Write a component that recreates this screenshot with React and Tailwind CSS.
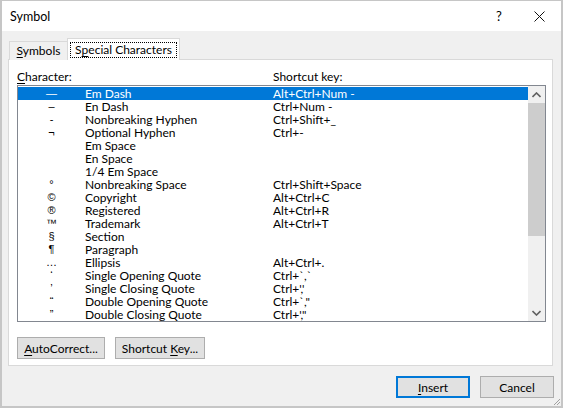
import React from "react";

// Word "Symbol" dialog, Special Characters tab

const rows = [
  ["\u2014", "Em Dash", "Alt+Ctrl+Num -"],
  ["\u2013", "En Dash", "Ctrl+Num -"],
  ["-", "Nonbreaking Hyphen", "Ctrl+Shift+_"],
  ["\u00ac", "Optional Hyphen", "Ctrl+-"],
  ["", "Em Space", ""],
  ["", "En Space", ""],
  ["", "1/4 Em Space", ""],
  ["\u00b0", "Nonbreaking Space", "Ctrl+Shift+Space"],
  ["\u00a9", "Copyright", "Alt+Ctrl+C"],
  ["\u00ae", "Registered", "Alt+Ctrl+R"],
  ["\u2122", "Trademark", "Alt+Ctrl+T"],
  ["\u00a7", "Section", ""],
  ["\u00b6", "Paragraph", ""],
  ["\u2026", "Ellipsis", "Alt+Ctrl+."],
  ["\u2018", "Single Opening Quote", "Ctrl+`,`"],
  ["\u2019", "Single Closing Quote", "Ctrl+','"],
  ["\u201c", "Double Opening Quote", "Ctrl+`,\""],
  ["\u201d", "Double Closing Quote", "Ctrl+',\""],
];

function U({ children }) {
  return <span className="underline underline-offset-2">{children}</span>;
}

function Btn({ children, w, primary }) {
  return (
    <div
      className={
        "h-[22px] flex items-center justify-center bg-[#e1e1e1] " +
        w +
        (primary ? " border-2 border-[#0078d7]" : " border border-[#adadad]")
      }
    >
      {children}
    </div>
  );
}

export default function App() {
  return (
    <div className="w-[563px] h-[408px] flex flex-col border-t border-x-2 border-b-2 border-[#c6c6c6] font-['Lato',sans-serif] text-[12px] text-black leading-[15px] relative overflow-hidden">
      {/* title bar */}
      <div className="h-[30px] bg-white flex items-center pl-[8px] shrink-0">
        <span className="flex-1 text-[12.5px]">Symbol</span>
        <span className="w-[20px] text-center text-[13px] mr-[25px]">?</span>
        <svg width="11" height="11" viewBox="0 0 11 11" className="mr-[16px]">
          <path d="M0.5 0.5L10.5 10.5M10.5 0.5L0.5 10.5" stroke="#111" strokeWidth="1" />
        </svg>
      </div>

      {/* body */}
      <div className="flex-1 bg-[#f0f0f0] pt-[7px] pl-[6px] pr-[8px] flex flex-col">
        {/* tabs */}
        <div className="h-[22px] flex items-end pl-[1px] relative z-10 -mb-px">
          <div className="h-[19px] w-[58px] border-t border-l border-[#d9d9d9] bg-[#f0f0f0] flex items-center justify-center pb-[1px]">
            <span><U>S</U>ymbols</span>
          </div>
          <div className="h-[22px] w-[113px] border-t border-x border-[#d9d9d9] bg-white flex items-center justify-center">
            <div className="border border-dotted border-black px-[4px] h-[16px] flex items-center">
              S<U>p</U>ecial Characters
            </div>
          </div>
        </div>

        {/* panel */}
        <div className="h-[307px] border border-[#d9d9d9] bg-white pt-[9px] pl-[8px]">
          <div className="flex h-[16px]">
            <span className="w-[256px]"><U>C</U>haracter:</span>
            <span>Shortcut key:</span>
          </div>
          <div className="w-[529px] h-[237px] border border-[#828790] flex">
            <div className="flex-1 pt-px overflow-hidden">
              {rows.map(([sym, name, key], i) => (
                <div
                  key={i}
                  className={
                    "h-[13px] leading-[13px] flex items-center overflow-hidden " +
                    (i === 0 ? "bg-[#0078d7] text-white" : "")
                  }
                >
                  <span className="w-[67px] h-[13px] leading-[13px] text-center text-[11px] font-['Liberation_Sans',sans-serif]">{sym}</span>
                  <span className="w-[188px] h-[13px] leading-[13px] whitespace-nowrap">{name}</span>
                  <span className="h-[13px] leading-[13px] whitespace-nowrap">{key}</span>
                </div>
              ))}
            </div>
            {/* scrollbar */}
            <div className="w-[17px] bg-[#f0f0f0] flex flex-col">
              <div className="h-[17px] flex items-center justify-center">
                <svg width="9" height="6" viewBox="0 0 9 6">
                  <path d="M0.5 5L4.5 1L8.5 5" stroke="#606060" strokeWidth="1.6" fill="none" />
                </svg>
              </div>
              <div className="h-[133px] bg-[#cdcdcd]" />
              <div className="flex-1" />
              <div className="h-[17px] flex items-center justify-center">
                <svg width="9" height="6" viewBox="0 0 9 6">
                  <path d="M0.5 1L4.5 5L8.5 1" stroke="#606060" strokeWidth="1.6" fill="none" />
                </svg>
              </div>
            </div>
          </div>
          <div className="flex gap-[10px] mt-[15px]">
            <Btn w="w-[88px]"><span><U>A</U>utoCorrect...</span></Btn>
            <Btn w="w-[90px]"><span>Shortcut <U>K</U>ey...</span></Btn>
          </div>
        </div>

        {/* dialog buttons */}
        <div className="flex justify-end gap-[10px] mt-[10px] -mr-px">
          <Btn w="w-[74px]" primary><span><U>I</U>nsert</span></Btn>
          <Btn w="w-[74px]"><span>Cancel</span></Btn>
        </div>
      </div>

      {/* resize grip */}
      <svg width="8" height="8" viewBox="0 0 8 8" className="absolute right-0 bottom-0">
        <path d="M7 1L1 7M7 4L4 7M7 7L7 7" stroke="#a0a0a0" strokeWidth="1" />
      </svg>
    </div>
  );
}
